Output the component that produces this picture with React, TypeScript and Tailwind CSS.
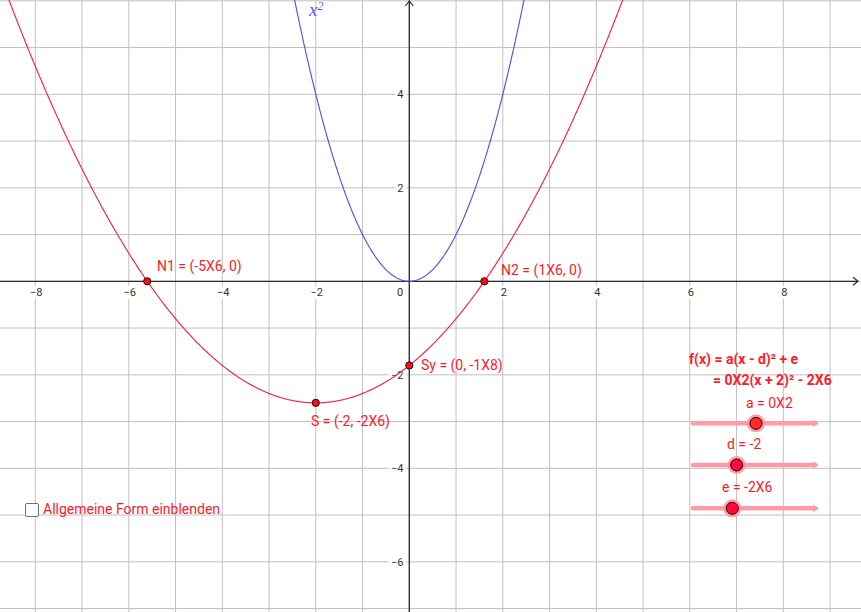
import React from "react";

const OX = 409.3;
const OY = 281.3;
const U = 46.75;
const W = 861;
const H = 612;

const sx = (x: number) => OX + x * U;
const sy = (y: number) => OY - y * U;

function curvePath(f: (x: number) => number, from: number, to: number) {
  const pts: string[] = [];
  for (let x = from; x <= to + 1e-9; x += 0.02) {
    pts.push(`${sx(x).toFixed(2)},${sy(f(x)).toFixed(2)}`);
  }
  return "M" + pts.join(" L");
}

const red = (x: number) => 0.2 * (x + 2) ** 2 - 2.6;
const blue = (x: number) => x * x;

const xTicks = [-8, -6, -4, -2, 2, 4, 6, 8];
const yTicks = [4, 2, -2, -4, -6];

const points = [
  { x: -5.606, y: 0 },
  { x: 1.606, y: 0 },
  { x: 0, y: -1.8 },
  { x: -2, y: -2.6 },
];

const sliders = [
  { y: 423.3, knob: 756, fill: "#ff2a2a" },
  { y: 465, knob: 736.7, fill: "#ff0a3c" },
  { y: 508.3, knob: 732.3, fill: "#ff0a3c" },
];

function Graph() {
  const vLines: number[] = [];
  for (let i = -8; i <= 9; i++) vLines.push(i);
  const hLines: number[] = [];
  for (let j = -7; j <= 6; j++) hLines.push(j);

  return (
    <svg width={W} height={H} className="absolute inset-0">
      {vLines.map((i) => (
        <line key={"v" + i} x1={sx(i)} y1={0} x2={sx(i)} y2={H} stroke="#c0c0c0" strokeWidth={1} />
      ))}
      {hLines.map((j) => (
        <line key={"h" + j} x1={0} y1={sy(j)} x2={W} y2={sy(j)} stroke="#c0c0c0" strokeWidth={1} />
      ))}
      {/* axes */}
      <line x1={0} y1={OY} x2={858} y2={OY} stroke="#2b2b2b" strokeWidth={1.3} />
      <path d={`M853,${OY - 4} L858,${OY} L853,${OY + 4}`} fill="none" stroke="#2b2b2b" strokeWidth={1.2} />
      <line x1={OX} y1={1} x2={OX} y2={H} stroke="#2b2b2b" strokeWidth={1.3} />
      <path d={`M${OX - 4},6 L${OX},1 L${OX + 4},6`} fill="none" stroke="#2b2b2b" strokeWidth={1.2} />
    </svg>
  );
}

function Curves() {
  return (
    <svg width={W} height={H} className="absolute inset-0">
      <path d={curvePath(blue, -2.6, 2.6)} fill="none" stroke="#4a4aff" strokeWidth={1.1} />
      <path d={curvePath(red, -9, 5)} fill="none" stroke="#ff1744" strokeWidth={1.1} />
      {points.map((p, k) => (
        <circle key={k} cx={sx(p.x)} cy={sy(p.y)} r={3.6} fill="#ff0a1e" stroke="#2a0000" strokeWidth={1} />
      ))}
      {sliders.map((s, k) => (
        <g key={k}>
          <line x1={693} y1={s.y} x2={815} y2={s.y} stroke="#ff9aa6" strokeWidth={4.5} strokeLinecap="round" />
          <path d={`M813,${s.y - 3} L817.5,${s.y} L813,${s.y + 3}`} fill="none" stroke="#ff9aa6" strokeWidth={1.5} />
          <circle cx={s.knob} cy={s.y} r={9} fill="#ff8d9c" opacity={0.85} />
          <circle cx={s.knob} cy={s.y} r={6} fill={s.fill} stroke="#1a0000" strokeWidth={1} />
        </g>
      ))}
    </svg>
  );
}

export default function App() {
  return (
    <div className="relative h-[612px] w-[861px] overflow-hidden bg-white font-['Roboto','Liberation_Sans',sans-serif]">
      <Graph />

      {/* axis numbers */}
      {xTicks.map((v) => (
        <span
          key={"xt" + v}
          className="absolute -translate-x-1/2 bg-white px-[2px] text-[11px] leading-[13px] text-[#333]"
          style={{ left: sx(v) + 1, top: 286 }}
        >
          {v < 0 ? "\u2212" + -v : v}
        </span>
      ))}
      <span className="absolute left-[396px] top-[286px] bg-white px-[1px] text-[11px] leading-[13px] text-[#333]">0</span>
      {yTicks.map((v) => (
        <span
          key={"yt" + v}
          className="absolute -translate-y-1/2 bg-white px-[2px] text-right text-[11px] leading-[13px] text-[#333]"
          style={{ right: W - 405.5, top: sy(v) }}
        >
          {v < 0 ? "\u2212" + -v : v}
        </span>
      ))}

      <Curves />

      {/* x² label */}
      <span className="absolute left-[309px] top-[0px] font-['Liberation_Serif',serif] text-[19px] italic leading-[20px] text-[#5a5aff]">
        x<sup className="text-[12px]">2</sup>
      </span>

      {/* point labels */}
      <span className="absolute left-[157px] top-[258px] text-[14px] leading-[17px] text-[#ff1a2a]">N1 = (-5X6, 0)</span>
      <span className="absolute left-[501px] top-[262px] text-[14px] leading-[17px] text-[#ff1a2a]">N2 = (1X6, 0)</span>
      <span className="absolute left-[421px] top-[357px] text-[14px] leading-[17px] text-[#ff1a2a]">Sy = (0, -1X8)</span>
      <span className="absolute left-[311px] top-[413px] text-[14px] leading-[17px] text-[#ff1a2a]">S = (-2, -2X6)</span>

      {/* formula */}
      <div className="absolute left-[689px] top-[349px] flex flex-col text-[14px] font-bold leading-[21px] text-[#ff1a2a]">
        <span>f(x) = a(x - d)² + e</span>
        <span className="pl-[24px]">= 0X2(x + 2)² - 2X6</span>
      </div>

      {/* slider labels */}
      <span className="absolute left-[746px] top-[395px] text-[14px] leading-[17px] text-[#ff1a2a]">a = 0X2</span>
      <span className="absolute left-[727px] top-[436px] text-[14px] leading-[17px] text-[#ff1a2a]">d = -2</span>
      <span className="absolute left-[722px] top-[479px] text-[14px] leading-[17px] text-[#ff1a2a]">e = -2X6</span>

      {/* checkbox */}
      <label className="absolute left-[25px] top-[501px] flex items-center gap-[4px]">
        <span className="block h-[14px] w-[14px] rounded-[2px] border-[1.5px] border-[#707070] bg-white" />
        <span className="text-[14px] leading-[17px] text-[#ff1a2a]">Allgemeine Form einblenden</span>
      </label>
    </div>
  );
}
